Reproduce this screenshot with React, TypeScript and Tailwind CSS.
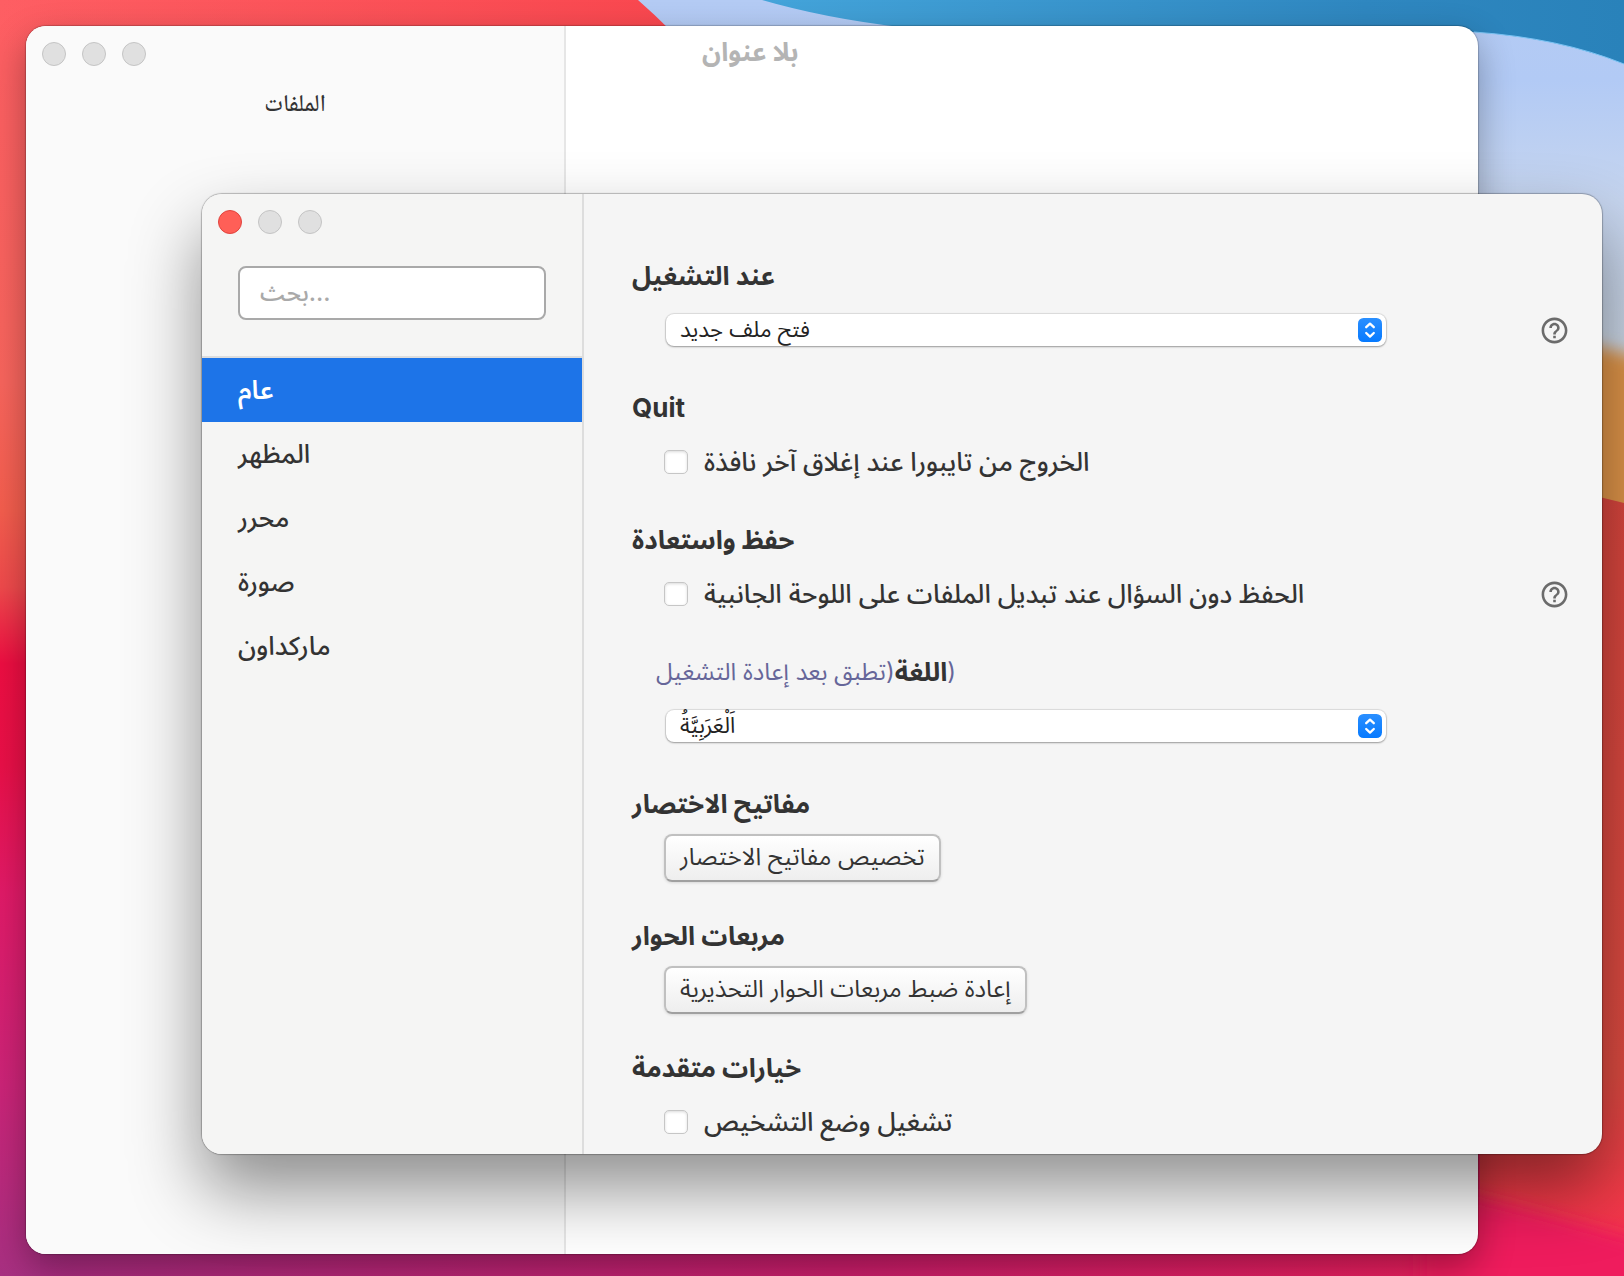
import type { ReactNode } from "react";
import clsx from "clsx";
import { MdHelpOutline } from "react-icons/md";

const tabs = ["عام", "المظهر", "محرر", "صورة", "ماركداون"];

function Wallpaper() {
	return (
		<svg
			className="absolute inset-0 h-full w-full"
			viewBox="0 0 1624 1276"
			preserveAspectRatio="none"
			aria-hidden="true"
		>
			<defs>
				<linearGradient id="coral" x1="0" y1="0" x2="0" y2="1">
					<stop offset="0" stopColor="#fe5e63" />
					<stop offset="0.3" stopColor="#f8655d" />
					<stop offset="0.4" stopColor="#f55e4e" />
					<stop offset="0.46" stopColor="#f04a4c" />
					<stop offset="0.52" stopColor="#ee0e42" />
					<stop offset="0.6" stopColor="#ea1048" />
					<stop offset="0.7" stopColor="#e21a68" />
					<stop offset="0.85" stopColor="#cc2478" />
					<stop offset="1" stopColor="#a83082" />
				</linearGradient>
				<linearGradient id="topRed" x1="0" y1="0" x2="1" y2="0">
					<stop offset="0" stopColor="#f9464e" stopOpacity="0" />
					<stop offset="1" stopColor="#f9464e" />
				</linearGradient>
				<linearGradient id="floor" x1="0" y1="0" x2="1" y2="0">
					<stop offset="0" stopColor="#a92c80" />
					<stop offset="0.5" stopColor="#cc1e6c" />
					<stop offset="0.9" stopColor="#ee1f5e" />
					<stop offset="1" stopColor="#f01e5c" />
				</linearGradient>
				<linearGradient id="sky" x1="0" y1="0" x2="1" y2="0">
					<stop offset="0" stopColor="#44a4da" />
					<stop offset="0.7" stopColor="#2f87c0" />
					<stop offset="1" stopColor="#2982ba" />
				</linearGradient>
				<linearGradient id="haze" x1="0" y1="0" x2="0" y2="1">
					<stop offset="0" stopColor="#b4cbf4" />
					<stop offset="0.2" stopColor="#b2caf5" />
					<stop offset="0.5" stopColor="#c6d5ef" />
					<stop offset="0.85" stopColor="#ccd8e8" />
					<stop offset="1" stopColor="#dcc8b8" />
				</linearGradient>
				<linearGradient id="rightRed" x1="0" y1="0" x2="0" y2="1">
					<stop offset="0" stopColor="#da463e" />
					<stop offset="0.75" stopColor="#e04c42" />
					<stop offset="0.9" stopColor="#f43a48" />
					<stop offset="1" stopColor="#f22a54" />
				</linearGradient>
				<filter id="soft" x="-20%" y="-20%" width="140%" height="140%">
					<feGaussianBlur stdDeviation="8" />
				</filter>
			</defs>
			<rect width="1624" height="1276" fill="url(#coral)" />
			<rect width="700" height="60" fill="url(#topRed)" />
			<rect x="40" y="1150" width="1584" height="126" fill="url(#floor)" />
			<path d="M638 0 Q654 14 670 30 L700 400 H1624 V0 Z" fill="url(#haze)" />
			<path d="M762 0 Q824 18 900 27 L1474 32 Q1560 38 1624 64 V0 Z" fill="url(#sky)" />
			<path d="M1474 32 Q1560 38 1624 64" fill="none" stroke="#7cc4f4" strokeWidth="1" />
			<path d="M1560 336 L1660 364 V540 H1560 Z" fill="#e0954a" filter="url(#soft)" />
			<path d="M1480 470 Q1580 492 1624 503 V1276 H1480 Z" fill="url(#rightRed)" />
			<path
				d="M1420 1182 Q1550 1214 1700 1258 V1340 H1420 Z"
				fill="#ef1e5d"
				filter="url(#soft)"
			/>
		</svg>
	);
}

function TrafficLights({ active = false }: { active?: boolean }) {
	return (
		<div className="flex gap-4 px-4 pt-4">
			<button
				type="button"
				aria-label="إغلاق"
				className={clsx(
					"size-6 rounded-full border",
					active ? "border-[#e0443e] bg-[#ff5f57]" : "border-[#c4c4c4] bg-[#e0e0e0]"
				)}
			/>
			<button
				type="button"
				aria-label="تصغير"
				className="size-6 rounded-full border border-[#c4c4c4] bg-[#e0e0e0]"
			/>
			<button
				type="button"
				aria-label="تكبير"
				className="size-6 rounded-full border border-[#c4c4c4] bg-[#e0e0e0]"
			/>
		</div>
	);
}

function EditorWindow() {
	return (
		<div className="absolute top-[26px] right-[146px] bottom-[22px] left-[26px] flex overflow-hidden rounded-[20px] bg-white shadow-[0_0_1px_1px_rgba(0,0,0,0.2),0_14px_36px_rgba(0,0,0,0.32)]">
			<aside className="w-[540px] shrink-0 border-r-2 border-[#e6e6e6] bg-[#fafafa]">
				<TrafficLights />
				<p className="pt-5 text-center font-['Noto_Naskh_Arabic','DejaVu_Sans',serif] text-2xl leading-10 font-medium text-[#333333]">
					الملفات
				</p>
			</aside>
			<h1 className="px-[136px] pt-1.5 text-[26px] leading-10 font-bold text-[#b4b4b4]">بلا عنوان</h1>
		</div>
	);
}

function Section({ title, help, children }: { title: ReactNode; help?: boolean; children: ReactNode }) {
	return (
		<section className="pb-[22px]">
			<h2 className="h-[54px] text-[26px] leading-[56px] font-bold">{title}</h2>
			<div className="flex h-14 items-center pl-8">
				{children}
				{help && (
					<button type="button" aria-label="مساعدة" className="ml-auto text-[#6b6b6b]">
						<MdHelpOutline className="size-[31px]" aria-hidden="true" />
					</button>
				)}
			</div>
		</section>
	);
}

// The select is taller than its white box so that low Arabic descenders are not cut off.
function Select({ label, value }: { label: string; value: string }) {
	return (
		<div className="relative mx-0.5 flex h-8 w-full max-w-[720px] items-center rounded-lg bg-white shadow-[0_0_1px_1px_rgba(0,0,0,0.1),0_1px_2px_rgba(0,0,0,0.3)]">
			<select
				aria-label={label}
				className="-mt-0.5 h-11 w-full shrink-0 appearance-none bg-transparent pr-10 pl-3.5 text-[22px] text-[#222222]"
			>
				<option>{value}</option>
			</select>
			<svg
				className="pointer-events-none absolute top-1 right-1 size-6"
				viewBox="0 0 24 24"
				fill="none"
				aria-hidden="true"
			>
				<defs>
					<linearGradient id="knob" x1="0" y1="0" x2="0" y2="1">
						<stop offset="0" stopColor="#2a8fff" />
						<stop offset="1" stopColor="#067aff" />
					</linearGradient>
				</defs>
				<rect width="24" height="24" rx="5.5" fill="url(#knob)" />
				<path
					d="M8.2 9.2 12 5.6 15.8 9.2M8.2 15 12 18.6 15.8 15"
					stroke="#fff"
					strokeWidth="2.3"
					strokeLinecap="round"
					strokeLinejoin="round"
				/>
			</svg>
		</div>
	);
}

function Checkbox({ label }: { label: string }) {
	return (
		<label className="flex items-center gap-4 text-[26px] leading-10 font-medium">
			<input
				type="checkbox"
				className="size-6 appearance-none rounded-[5px] border border-[#c6c6c6] bg-white shadow-[inset_0_1px_3px_rgba(0,0,0,0.15)]"
			/>
			{label}
		</label>
	);
}

function PushButton({ children }: { children: ReactNode }) {
	return (
		<button
			type="button"
			className="h-12 rounded-lg border-2 border-[#c0c0c0] border-b-[#a0a0a0] bg-linear-to-b from-white to-[#eeeeee] px-3.5 pb-0.5 text-2xl leading-10 whitespace-nowrap shadow-[0_1px_3px_rgba(0,0,0,0.12)]"
		>
			{children}
		</button>
	);
}

function PreferencesWindow() {
	return (
		<div className="absolute top-[194px] right-[22px] bottom-[122px] left-[202px] flex overflow-hidden rounded-[20px] bg-[#f5f5f5] text-[#333333] shadow-[0_0_1px_1px_rgba(0,0,0,0.25),0_36px_70px_rgba(0,0,0,0.44)]">
			<aside className="w-[382px] shrink-0 border-r-2 border-[#dddddd] bg-[#f5f5f4]">
				<TrafficLights active />
				<div className="border-b-2 border-[#dddddd] px-9 pt-8 pb-9">
					<input
						type="text"
						aria-label="بحث"
						placeholder="بحث..."
						className="block h-[54px] w-full rounded-lg border-2 border-[#a9a9a9] bg-white px-5 pb-0.5 text-2xl font-medium placeholder:text-[#a9a9a9]"
					/>
				</div>
				<nav className="flex flex-col">
					{tabs.map((tab, idx) => (
						<button
							key={tab}
							type="button"
							className={clsx(
								"h-16 px-9 pb-0.5 text-left text-[26px]",
								idx === 0 ? "bg-[#1d74e8] font-semibold text-white" : "font-medium"
							)}
						>
							{tab}
						</button>
					))}
				</nav>
			</aside>
			<main className="min-w-0 flex-1 pt-[54px] pr-8 pl-12">
				<Section title="عند التشغيل" help>
					<Select label="عند التشغيل" value="فتح ملف جديد" />
				</Section>
				<Section title="Quit">
					<Checkbox label="الخروج من تايبورا عند إغلاق آخر نافذة" />
				</Section>
				<Section title="حفظ واستعادة" help>
					<Checkbox label="الحفظ دون السؤال عند تبديل الملفات على اللوحة الجانبية" />
				</Section>
				<Section
					title={
						<span className="flex pl-6">
							<span dir="rtl" className="text-2xl leading-[56px] font-normal text-[#666699]">
								(تطبق بعد إعادة التشغيل
							</span>
							اللغة
							<span className="text-2xl leading-[56px] font-normal text-[#666699]">)</span>
						</span>
					}
				>
					<Select label="اللغة" value="اَلْعَرَبِيَّةُ" />
				</Section>
				<Section title="مفاتيح الاختصار">
					<PushButton>تخصيص مفاتيح الاختصار</PushButton>
				</Section>
				<Section title="مربعات الحوار">
					<PushButton>إعادة ضبط مربعات الحوار التحذيرية</PushButton>
				</Section>
				<Section title="خيارات متقدمة">
					<Checkbox label="تشغيل وضع التشخيص" />
				</Section>
			</main>
		</div>
	);
}

export default function App() {
	return (
		<div className="relative min-h-screen overflow-hidden font-['Inter','Noto_Sans_Arabic','DejaVu_Sans',sans-serif]">
			<Wallpaper />
			<EditorWindow />
			<PreferencesWindow />
		</div>
	);
}
